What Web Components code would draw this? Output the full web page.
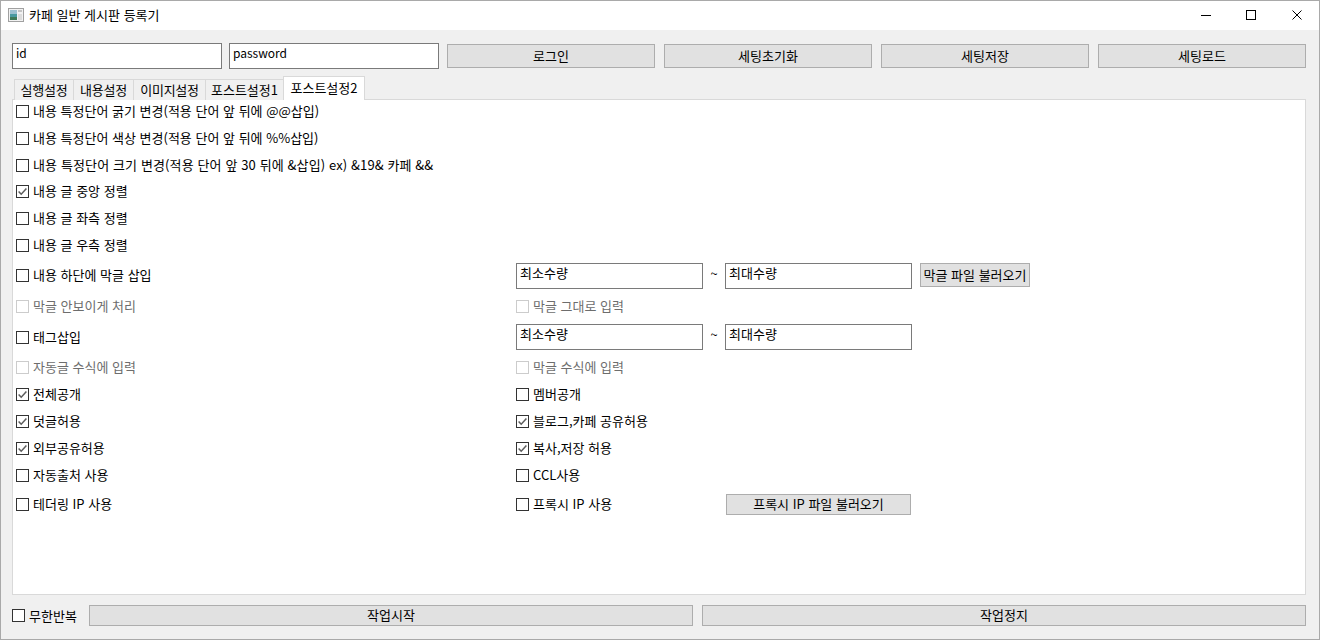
<!DOCTYPE html>
<html lang="ko">
<head>
<meta charset="utf-8">
<title>카페 일반 게시판 등록기</title>
<style>
  html, body { margin: 0; height: 100%; }
  body { font: 13px "Noto Sans CJK KR", "Noto Sans", sans-serif; color: #000; }
</style>
</head>
<body>
<app-window>
  <title-bar slot="title">카페 일반 게시판 등록기</title-bar>

  <login-row>
    <text-box style="width:210px;height:26px;font-size:12px;flex:none">id</text-box>
    <text-box style="width:210px;height:26px;font-size:12px;flex:none">password</text-box>
    <push-button class="grow" style="margin-left:1px">로그인</push-button>
    <push-button class="grow">세팅초기화</push-button>
    <push-button class="grow">세팅저장</push-button>
    <push-button class="grow">세팅로드</push-button>
  </login-row>

  <tab-strip>
    <tab-item style="width:60px;letter-spacing:-.25px">실행설정</tab-item>
    <tab-item style="width:61px;letter-spacing:-.25px">내용설정</tab-item>
    <tab-item style="width:73px;letter-spacing:-.3px">이미지설정</tab-item>
    <tab-item style="width:79px">포스트설정1</tab-item>
    <tab-item active style="width:82px">포스트설정2</tab-item>
  </tab-strip>

  <settings-pane>
    <setting-row h="27"><check-box>내용 특정단어 굵기 변경(적용 단어 앞 뒤에 @@삽입)</check-box></setting-row>
    <setting-row h="27"><check-box>내용 특정단어 색상 변경(적용 단어 앞 뒤에 %%삽입)</check-box></setting-row>
    <setting-row h="26"><check-box style="letter-spacing:.12px">내용 특정단어 크기 변경(적용 단어 앞 30 뒤에 &amp;삽입) ex) &amp;19&amp; 카페 &amp;&amp;</check-box></setting-row>
    <setting-row h="27"><check-box checked>내용 글 중앙 정렬</check-box></setting-row>
    <setting-row h="27"><check-box>내용 글 좌측 정렬</check-box></setting-row>
    <setting-row h="30"><check-box>내용 글 우측 정렬</check-box></setting-row>
    <setting-row h="31">
      <check-box>내용 하단에 막글 삽입</check-box>
      <range-fields slot="right" style="margin-top:2px" button="막글 파일 불러오기"></range-fields>
    </setting-row>
    <setting-row h="31">
      <check-box disabled>막글 안보이게 처리</check-box>
      <check-box slot="right" disabled>막글 그대로 입력</check-box>
    </setting-row>
    <setting-row h="30">
      <check-box>태그삽입</check-box>
      <range-fields slot="right"></range-fields>
    </setting-row>
    <setting-row h="27">
      <check-box disabled>자동글 수식에 입력</check-box>
      <check-box slot="right" disabled>막글 수식에 입력</check-box>
    </setting-row>
    <setting-row h="27">
      <check-box checked>전체공개</check-box>
      <check-box slot="right">멤버공개</check-box>
    </setting-row>
    <setting-row h="27">
      <check-box checked>덧글허용</check-box>
      <check-box slot="right" checked>블로그,카페 공유허용</check-box>
    </setting-row>
    <setting-row h="27">
      <check-box checked>외부공유허용</check-box>
      <check-box slot="right" checked>복사,저장 허용</check-box>
    </setting-row>
    <setting-row h="29">
      <check-box>자동출처 사용</check-box>
      <check-box slot="right">CCL사용</check-box>
    </setting-row>
    <setting-row h="30">
      <check-box>테더링 IP 사용</check-box>
      <proxy-line slot="right"></proxy-line>
    </setting-row>
  </settings-pane>

  <bottom-row>
    <check-box class="loop">무한반복</check-box>
    <push-button style="flex:1;height:21px">작업시작</push-button>
    <push-button style="flex:1;height:21px">작업정지</push-button>
  </bottom-row>
</app-window>

<script>
  function define(name, html) {
    customElements.define(name, class extends HTMLElement {
      constructor() {
        super();
        this.attachShadow({mode: 'open'});
        this.shadowRoot.innerHTML = typeof html == 'function' ? html(this) : html;
      }
    });
  }

  define('app-window', `
    <style>
      :host { display: flex; flex-direction: column; box-sizing: border-box; width: 1320px; height: 640px;
        border: 1px solid #a9a9a9; background: #f0f0f0; overflow: hidden; }
      .body { flex: 1; display: flex; flex-direction: column; padding: 13px 13px 13px 11px; min-height: 0; }
    </style>
    <slot name="title"></slot>
    <div class="body"><slot></slot></div>`);

  define('title-bar', `
    <style>
      :host { display: flex; align-items: center; height: 29px; background: #fff; flex: none; }
      .icon { margin-left: 7px; width: 16px; height: 14px; position: relative; top: -1px; }
      .label { margin-left: 5px; position: relative; top: -1px; }
      .btns { margin: 0 -1px 0 auto; display: flex; align-self: flex-start; }
      .btns div { width: 46px; height: 27px; display: flex; align-items: center; justify-content: center; }
      svg { display: block; }
    </style>
    <svg class="icon" viewBox="0 0 16 14">
      <rect x=".5" y=".5" width="15" height="13" fill="#f2f2f2" stroke="#a0a0a0"/>
      <rect x="2" y="2" width="7" height="10" fill="#4a9aa0"/>
      <rect x="2" y="2" width="7" height="4" fill="#9cc0d0"/>
      <rect x="2" y="9" width="7" height="3" fill="#3f7a58"/>
      <rect x="10" y="2" width="4" height="2" fill="#c4c4c4"/>
      <rect x="10" y="6" width="4" height="6" fill="#dcdcdc"/>
    </svg>
    <span class="label"><slot></slot></span>
    <div class="btns">
      <div><svg style="margin-left:2px" width="10" height="10" viewBox="0 0 10 10"><path d="M0 5.5H10" stroke="#000" fill="none"/></svg></div>
      <div><svg width="10" height="10" viewBox="0 0 10 10"><rect x=".5" y=".5" width="9" height="9" stroke="#000" fill="none"/></svg></div>
      <div><svg width="10" height="10" viewBox="0 0 10 10"><path d="M.5 .5L9.5 9.5M9.5 .5L.5 9.5" stroke="#000" fill="none"/></svg></div>
    </div>`);

  define('login-row', `
    <style>
      :host { display: flex; gap: 7px; flex: none; }
      ::slotted(.grow) { flex: none; width: 208px; height: 24px; margin: 1px 0 0 2px; }
    </style>
    <slot></slot>`);

  define('text-box', `
    <style>
      :host { display: block; box-sizing: border-box; border: 1px solid #7a7a7a; background: #fff;
        padding: 0 3px; line-height: 17px; }
    </style>
    <slot></slot>`);

  define('push-button', `
    <style>
      :host { display: flex; align-items: center; justify-content: center; box-sizing: border-box;
        border: 1px solid #adadad; background: #e1e1e1; white-space: nowrap; padding-bottom: 2px; }
    </style>
    <slot></slot>`);

  define('tab-strip', `
    <style>
      :host { display: flex; align-items: flex-end; height: 23px; margin: 8px 0 -1px 3px; flex: none;
        position: relative; z-index: 1; }
    </style>
    <slot></slot>`);

  define('tab-item', `
    <style>
      :host { display: flex; align-items: center; justify-content: center; box-sizing: border-box; flex: none;
        height: 21px; padding-bottom: 2px; background: #f0f0f0; border: 1px solid #d9d9d9; border-bottom: 0;
        margin-left: -1px; white-space: nowrap; }
      :host([active]) { height: 24px; background: #fff; padding-bottom: 3px; position: relative; }
    </style>
    <slot></slot>`);

  define('settings-pane', `
    <style>
      :host { display: block; flex: 1; min-height: 0; box-sizing: border-box; background: #fff;
        border: 1px solid #d9d9d9; padding-left: 3px; }
    </style>
    <slot></slot>`);

  define('setting-row', el => `
    <style>
      :host { display: grid; grid-template-columns: 500px 1fr; align-items: start; height: ${el.getAttribute('h')}px; }
      .cell { display: flex; align-items: center; height: 22px; }
    </style>
    <div class="cell"><slot></slot></div>
    <div class="cell"><slot name="right"></slot></div>`);

  const tick = '<svg viewBox="0 0 11 11"><path d="M1.6 5.4L4.2 8.2L9.4 2.4" fill="none" stroke="#5d5d5d" stroke-width="1.5"/></svg>';
  define('check-box', el => `
    <style>
      :host { display: inline-flex; align-items: center; gap: 4px; line-height: 16px; white-space: nowrap; }
      :host([disabled]) { color: #6d6d6d; }
      .box { box-sizing: border-box; width: 13px; height: 13px; border: 1px solid #333; background: #fff; flex: none; }
      :host([disabled]) .box { border-color: #ccc; }
      svg { display: block; width: 11px; height: 11px; }
    </style>
    <span class="box">${el.hasAttribute('checked') ? tick : ''}</span>
    <span><slot></slot></span>`);

  define('range-fields', el => `
    <style>
      :host { display: flex; align-items: center; }
      text-box { width: 187px; height: 26px; }
      .sep { width: 22px; text-align: center; position: relative; top: -3px; }
      push-button { width: 110px; height: 24px; margin: 0 0 2px 8px; }
    </style>
    <text-box>최소수량</text-box><span class="sep">~</span><text-box>최대수량</text-box>
    ${el.hasAttribute('button') ? `<push-button>${el.getAttribute('button')}</push-button>` : ''}`);

  define('proxy-line', `
    <style>
      :host { display: flex; align-items: center; }
      check-box { width: 210px; }
      push-button { width: 185px; height: 21px; }
    </style>
    <check-box>프록시 IP 사용</check-box>
    <push-button>프록시 IP 파일 불러오기</push-button>`);

  define('bottom-row', `
    <style>
      :host { display: flex; align-items: center; gap: 9px; height: 21px; margin-top: 10px; flex: none; }
      ::slotted(.loop) { width: 68px; }
    </style>
    <slot></slot>`);
</script>
</body>
</html>
